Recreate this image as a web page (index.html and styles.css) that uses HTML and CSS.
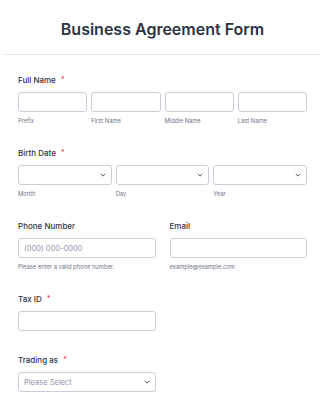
FILE: index.html
```html
<!DOCTYPE html>
<html lang="en">
<head>
    <meta charset="UTF-8">
    <meta name="viewport" content="width=device-width, initial-scale=1.0">
    <title>Business Agreement Form</title>
    <link rel="stylesheet" href="styles.css">
</head>
<body>
    <div class="form">
        <div class="header">
            <h1>Business Agreement Form</h1>
        </div>

        <div class="field">
            <label class="label">Full Name <span class="req">*</span></label>
            <div class="row row-4">
                <div class="cell"><div class="input"></div><span class="sub">Prefix</span></div>
                <div class="cell"><div class="input"></div><span class="sub">First Name</span></div>
                <div class="cell"><div class="input"></div><span class="sub">Middle Name</span></div>
                <div class="cell"><div class="input"></div><span class="sub">Last Name</span></div>
            </div>
        </div>

        <div class="field">
            <label class="label">Birth Date <span class="req">*</span></label>
            <div class="row row-3">
                <div class="cell">
                    <div class="input select">
                        <span></span>
                        <svg class="chev" viewBox="0 0 8 5"><path d="M1 1l3 3 3-3"/></svg>
                    </div>
                    <span class="sub">Month</span>
                </div>
                <div class="cell">
                    <div class="input select">
                        <span></span>
                        <svg class="chev" viewBox="0 0 8 5"><path d="M1 1l3 3 3-3"/></svg>
                    </div>
                    <span class="sub">Day</span>
                </div>
                <div class="cell">
                    <div class="input select">
                        <span></span>
                        <svg class="chev" viewBox="0 0 8 5"><path d="M1 1l3 3 3-3"/></svg>
                    </div>
                    <span class="sub">Year</span>
                </div>
            </div>
        </div>

        <div class="field">
            <div class="row row-2">
                <div class="cell">
                    <label class="label">Phone Number</label>
                    <div class="input"><span class="placeholder">(000) 000-0000</span></div>
                    <span class="sub">Please enter a valid phone number.</span>
                </div>
                <div class="cell">
                    <label class="label">Email</label>
                    <div class="input"></div>
                    <span class="sub">example@example.com</span>
                </div>
            </div>
        </div>

        <div class="field field-plain">
            <label class="label">Tax ID <span class="req">*</span></label>
            <div class="row row-2">
                <div class="input"></div>
            </div>
        </div>

        <div class="field">
            <label class="label">Trading as <span class="req">*</span></label>
            <div class="row row-2">
                <div class="input select">
                    <span class="placeholder">Please Select</span>
                    <svg class="chev" viewBox="0 0 8 5"><path d="M1 1l3 3 3-3"/></svg>
                </div>
            </div>
        </div>
    </div>
</body>
</html>
```

FILE: styles.css
```css
* {
    margin: 0;
    padding: 0;
    box-sizing: border-box;
}

body {
    font-family: Inter, "Noto Sans", sans-serif;
    background: #fff;
    color: #2c3345;
    width: 325px;
    height: 400px;
    overflow: hidden;
}

.header {
    margin: 0 4px;
    padding: 19px 0 15px;
    border-bottom: 1px solid #e3e5ea;
    text-align: center;
}

.header h1 {
    font-size: 16px;
    line-height: 20px;
    font-weight: 600;
    color: #2c3345;
}

.field {
    padding: 0 18px;
    margin-top: 20px;
}

.field + .field {
    margin-top: 23px;
}

.field-plain + .field {
    margin-top: 24px;
}

.label {
    display: block;
    font-size: 8px;
    line-height: 10px;
    font-weight: 500;
    color: #2c3345;
    margin-bottom: 7px;
}

.req {
    color: #f23a3c;
    font-size: 7px;
    margin-left: 3px;
    vertical-align: 1px;
}

.row {
    display: grid;
    gap: 4px;
}

.row-4 {
    grid-template-columns: repeat(4, 1fr);
}

.row-3 {
    grid-template-columns: repeat(3, 1fr);
}

.row-2 {
    grid-template-columns: 1fr 1fr;
    gap: 14px;
}

.cell {
    display: flex;
    flex-direction: column;
}

.input {
    height: 20px;
    border: 1px solid #c9cedb;
    border-radius: 3px;
    background: #fff;
    display: flex;
    align-items: center;
    padding: 0 5px;
}

.select {
    justify-content: space-between;
}

.chev {
    width: 6px;
    height: 4px;
    fill: none;
    stroke: #4a5266;
    stroke-width: 1.3;
}

.placeholder {
    font-size: 7.5px;
    color: #8f96a8;
}

.sub {
    display: block;
    font-size: 5.8px;
    line-height: 8px;
    color: #6f7689;
    margin-top: 5px;
}
```
